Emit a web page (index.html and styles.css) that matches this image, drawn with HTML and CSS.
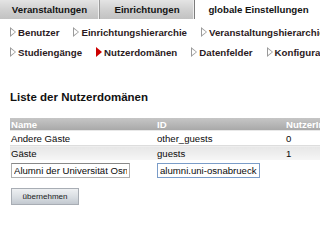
FILE: index.html
```html
<!DOCTYPE html>
<html lang="de">
<head>
<meta charset="utf-8">
<link rel="stylesheet" href="styles.css">
</head>
<body>
<div class="tabs">
  <div class="tab tab-1">Veranstaltungen</div>
  <div class="tab tab-2">Einrichtungen</div>
  <div class="tab tab-active">globale Einstellungen</div>
</div>
<nav class="subnav">
  <div class="subrow">
    <a class="item"><span class="tri"></span>Benutzer</a>
    <a class="item"><span class="tri"></span>Einrichtungshierarchie</a>
    <a class="item"><span class="tri"></span>Veranstaltungshierarchie</a>
  </div>
  <div class="subrow">
    <a class="item"><span class="tri"></span>Studiengänge</a>
    <a class="item current"><span class="tri"></span>Nutzerdomänen</a>
    <a class="item"><span class="tri"></span>Datenfelder</a>
    <a class="item"><span class="tri"></span>Konfiguration</a>
  </div>
</nav>
<h1 class="title">Liste der Nutzerdomänen</h1>
<table class="list">
  <thead>
    <tr><th class="c1">Name</th><th class="c2">ID</th><th class="c3">NutzerInnen</th></tr>
  </thead>
  <tbody>
    <tr class="odd"><td>Andere Gäste</td><td>other_guests</td><td>0</td></tr>
    <tr class="even"><td>Gäste</td><td>guests</td><td>1</td></tr>
    <tr class="edit"><td><input class="in in-name" type="text" value="Alumni der Universität Osnabrück"></td><td><input class="in in-id focus" type="text" value="alumni.uni-osnabrueck"></td><td></td></tr>
  </tbody>
</table>
<div class="actions"><button class="btn">übernehmen</button></div>
</body>
</html>
```
FILE: styles.css
```css
html, body {
  margin: 0;
  padding: 0;
  width: 320px;
  height: 240px;
  overflow: hidden;
  background: #fff;
  font-family: "Liberation Sans", Arial, sans-serif;
  color: #111;
}
.tabs {
  display: flex;
  height: 20px;
}
.tab {
  box-sizing: border-box;
  height: 19px;
  font-size: 9.7px;
  font-weight: bold;
  line-height: 20px;
  text-align: center;
  color: #141414;
  background: linear-gradient(#e4e4e4, #cfcfcf 55%, #c2c2c2);
  border-right: 1px solid #9a9a9a;
  box-shadow: inset -1px 0 0 #eee;
}
.tab-1 { width: 100px; }
.tab-2 { width: 95px; border-right: 1px solid #7c7c7c; }
.tab-active {
  flex: 1;
  background: #fff;
  border: none;
  box-shadow: none;
  height: 20px;
  padding-left: 2px;
}
.subnav {
  padding: 2px 0 0 10px;
}
.subrow {
  display: flex;
  gap: 14px;
  height: 20px;
  align-items: center;
  white-space: nowrap;
}
.item {
  display: flex;
  align-items: center;
  font-size: 9.7px;
  font-weight: bold;
  color: #2b1a22;
}
.tri {
  display: inline-block;
  width: 0;
  height: 0;
  border-top: 5px solid transparent;
  border-bottom: 5px solid transparent;
  border-left: 6px solid #9a9a9a;
  margin-right: 2px;
  position: relative;
}
.tri::after {
  content: "";
  position: absolute;
  left: -5px;
  top: -3px;
  border-top: 3px solid transparent;
  border-bottom: 3px solid transparent;
  border-left: 4px solid #fff;
}
.current .tri { border-left-color: #cc0000; }
.current .tri::after { display: none; }
.title {
  margin: 0;
  padding: 29px 0 0 10px;
  height: 20px;
  font-size: 11.5px;
  font-weight: bold;
  color: #111;
}
.list {
  margin: 7px 0 0 10px;
  border-collapse: collapse;
  width: 340px;
  font-size: 9.6px;
  table-layout: fixed;
}
.list th {
  text-align: left;
  color: #fff;
  font-weight: bold;
  height: 12px;
  padding: 0 0 0 1px;
  background: linear-gradient(#c6c6c6, #a9a9a9);
}
.c1 { width: 145px; }
.c2 { width: 128px; }
.list td {
  padding: 0 0 0 1px;
  height: 14px;
  color: #0a0a0a;
}
.odd td { background: #fff; border-top: 1px solid #e8e8e8; }
.even td { background: linear-gradient(#e6e6e6, #f6f6f6); border-top: 1px solid #ddd; }
.edit td { height: 19px; background: #fff; }
.in {
  box-sizing: border-box;
  height: 15px;
  margin: 1px 0 0 0;
  padding: 0 2px;
  font-family: "Liberation Sans", Arial, sans-serif;
  font-size: 9.6px;
  color: #0a0a0a;
  border: 1px solid #b0b0b0;
  border-top-color: #888;
  background: #fff;
  outline: none;
}
.in-name { width: 119px; }
.in-id { width: 103px; }
.focus { border: 1px solid #7a9cc8; }
.actions {
  padding: 6px 0 0 11px;
}
.btn {
  box-sizing: border-box;
  width: 68px;
  height: 17px;
  padding: 0;
  font-family: "Liberation Sans", Arial, sans-serif;
  font-size: 8px;
  color: #1a1a1a;
  border: 1px solid #a8adb4;
  background: linear-gradient(#eef0f2, #d6dbe0 60%, #c2c8cf);
}
```
